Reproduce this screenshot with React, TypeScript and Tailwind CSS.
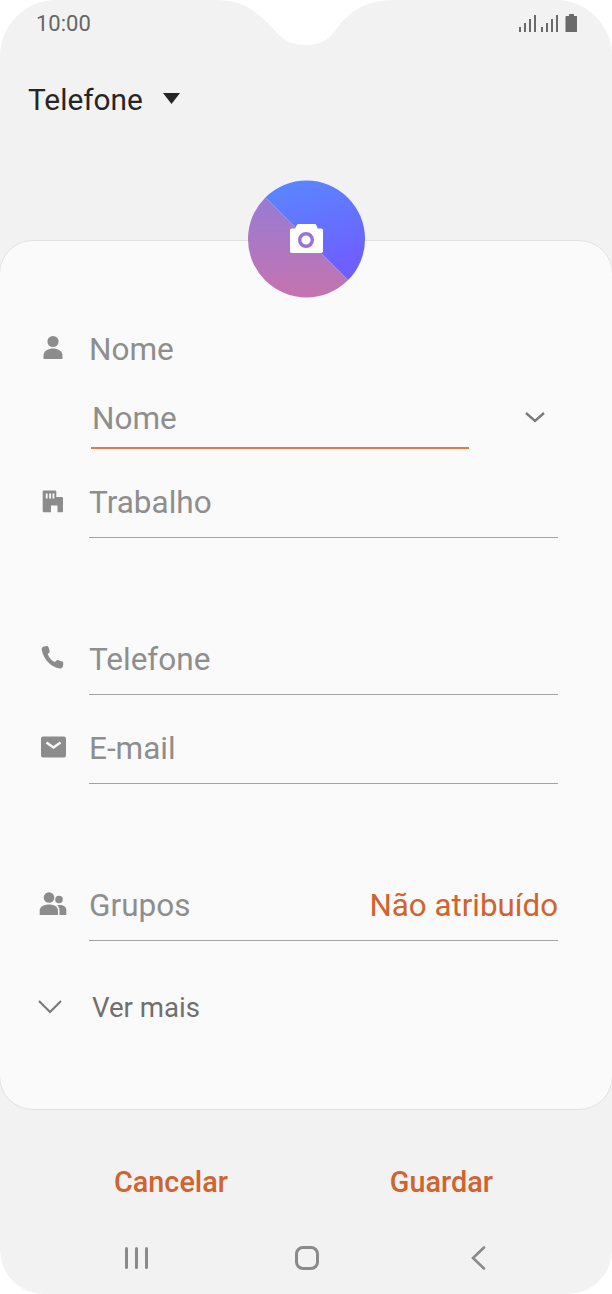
import type { ReactNode } from 'react';

const PersonIcon = () => (
  <svg width="28" height="28" viewBox="0 0 28 28" fill="#8c8c8c">
    <circle cx="14" cy="7.500" r="5.600" />
    <path d="M4.500 25v-3.500c0-4.500 5-7 9.500-7s9.500 2.500 9.500 7V25z" />
  </svg>
);

const StoreIcon = () => (
  <svg width="28" height="28" viewBox="0 0 28 28" fill="#8c8c8c">
    <path fillRule="evenodd" d="M5 3.500h11c.8 0 1.300.5 1.300 1.300V10h5.400c.8 0 1.300.5 1.300 1.300V24c0 .8-.5 1.300-1.300 1.300H18.500v-6.800h-6.500v6.800H5c-.8 0-1.300-.5-1.300-1.300V4.800C3.700 4 4.200 3.500 5 3.500zM6.800 6.500v5h1.800v-5zM10.200 6.500v5h1.800v-5zM13.500 6.500v5h1.800v-5z" />
  </svg>
);

const PhoneIcon = () => (
  <svg width="28" height="28" viewBox="0 0 28 28" fill="#8c8c8c">
    <path d="M2.700 5.500C2.400 3.800 3.800 2.600 5.200 2.400l2.400-.3c.9-.1 1.600.3 1.900 1.200l1.100 3.500c.3.8 0 1.500-.6 2L8.700 9.900c1.200 3.500 3.800 6.500 7.200 8.200l1.300-1.400c.6-.6 1.300-.8 2.100-.5l3.900 1.400c.8.300 1.200 1 1.100 1.900l-.4 2.800c-.2 1.300-1.500 2.400-3 2.100C11.700 23.200 4.200 15 2.700 5.500z" />
  </svg>
);

const MailIcon = () => (
  <svg width="28" height="28" viewBox="0 0 28 28">
    <rect x="2" y="3.500" width="25" height="21" rx="2" fill="#8c8c8c" />
    <path d="M7.500 9.500l7 5 7-5" fill="none" stroke="#fafafa" strokeWidth="2.400" />
  </svg>
);

const GroupsIcon = () => (
  <svg width="28" height="28" viewBox="0 0 28 28" fill="#8c8c8c">
    <circle cx="10" cy="7.500" r="5.300" />
    <circle cx="20" cy="9.500" r="3.800" />
    <path d="M.7 25v-4.500c0-4 4.500-6 9.300-6s9 2 9 6V25z" />
    <path d="M20.500 25v-4.500c0-2.300-.9-4-2.300-5.200.8-.2 1.700-.3 2.500-.3 3.500 0 6.600 1.800 6.600 5V25z" />
  </svg>
);

function Field({ icon, label, right }: { icon: ReactNode; label: string; right?: string }) {
  return (
    <div className="flex h-[72px]">
      <div className="flex w-[89px] items-center pl-[39px] pb-[3px]">{icon}</div>
      <div className="mr-[54px] flex flex-1 items-center justify-between border-b border-[#a3a3a3] pt-[2px]">
        <span className="text-[#8e8e8e]">{label}</span>
        {right && <span className="text-[31.3px] text-[#d0632e]">{right}</span>}
      </div>
    </div>
  );
}

export default function App() {
  return (
    <div className="relative h-[1294px] w-[612px] overflow-hidden bg-white font-['Roboto',sans-serif] text-[31.5px] leading-[44px]">
      <div className="flex h-full flex-col rounded-t-[56px] rounded-b-[44px] bg-[#f2f2f2]">
        {/* status bar */}
        <div className="flex h-[48px] shrink-0 items-center justify-between pl-[36px] pr-[35px]">
          <span className="text-[22px] text-[#666666]">10:00</span>
          <svg width="58" height="20" viewBox="0 0 58 20" fill="#6a6a6a">
            <rect x="0" y="13" width="2" height="5" />
            <rect x="5" y="9" width="2" height="9" />
            <rect x="10" y="5" width="2" height="13" />
            <rect x="15" y="1" width="2" height="17" />
            <rect x="22" y="13" width="2" height="5" />
            <rect x="27" y="9" width="2" height="9" />
            <rect x="32" y="5" width="2" height="13" />
            <rect x="37" y="1" width="2" height="17" />
            <path d="M47.500 2h2.500V0h5v2h2.500c.6 0 1 .4 1 1v15h-12V3c0-.6.4-1 1-1z" />
          </svg>
        </div>

        {/* account picker */}
        <div className="flex h-[192px] shrink-0 items-start pl-[28px] pt-[30px]">
          <span className="text-[29.8px] text-[#252525]">Telefone</span>
          <svg className="ml-[20px] mt-[15px]" width="17" height="11" viewBox="0 0 17 11" fill="#252525">
            <path d="M0 0h17l-8.500 11z" />
          </svg>
        </div>

        {/* form card */}
        <div className="-mx-px h-[870px] shrink-0 rounded-[34px] border border-[#e2e2e2] bg-[#fafafa] pt-[86px]">
          <div className="flex h-[44px]">
            <div className="flex w-[89px] items-center pl-[39px] pb-[2px]">
              <PersonIcon />
            </div>
            <span className="pt-[1px] text-[#8e8e8e]">Nome</span>
          </div>
          <div className="flex h-[77px]">
            <div className="ml-[91px] mt-[4px] h-[74px] w-[378px] border-b-2 border-[#e0784a] pl-[1px] pt-[22px] text-[#8e8e8e]">
              Nome
            </div>
            <svg className="ml-[55px] mt-[40px]" width="22" height="14" viewBox="0 0 22 14" fill="none" stroke="#7a7a7a" strokeWidth="2.400">
              <path d="M2 2l9 8 9-8" />
            </svg>
          </div>
          <div className="h-[18px]" />
          <Field icon={<StoreIcon />} label="Trabalho" />
          <div className="h-[85px]" />
          <Field icon={<PhoneIcon />} label="Telefone" />
          <div className="h-[17px]" />
          <Field icon={<MailIcon />} label="E-mail" />
          <div className="h-[85px]" />
          <Field icon={<GroupsIcon />} label="Grupos" right="Não atribuído" />
          <div className="mt-[44px] flex h-[44px] items-center pl-[37px]">
            <svg width="26" height="16" viewBox="0 0 26 16" fill="none" stroke="#7a7a7a" strokeWidth="2.200">
              <path d="M2 2l11 11L24 2" />
            </svg>
            <span className="ml-[29px] pt-[1px] text-[27.6px] text-[#6f6f6f]">Ver mais</span>
          </div>
        </div>

        {/* actions */}
        <div className="mt-[50px] flex h-[44px] shrink-0 items-center">
          <span className="ml-[114px] text-[28.8px] font-medium text-[#d0632e]">Cancelar</span>
          <span className="ml-[162px] text-[28.8px] font-medium text-[#d0632e]">Guardar</span>
        </div>

        {/* navigation bar */}
        <div className="mt-[39px] flex h-[30px] shrink-0 items-center">
          <div className="ml-[125px] flex gap-[7px]">
            <span className="h-[22px] w-[3px] rounded-full bg-[#8a8a8a]" />
            <span className="h-[22px] w-[3px] rounded-full bg-[#8a8a8a]" />
            <span className="h-[22px] w-[3px] rounded-full bg-[#8a8a8a]" />
          </div>
          <span className="ml-[147px] h-[24px] w-[24px] rounded-[8px] border-[3px] border-[#8a8a8a]" />
          <svg className="ml-[151px]" width="17" height="26" viewBox="0 0 17 26" fill="none" stroke="#8a8a8a" strokeWidth="2.600" strokeLinecap="round">
            <path d="M14 2.500L3 13l11 10.500" />
          </svg>
        </div>
      </div>

      {/* notch */}
      <svg className="absolute left-[200px] top-0" width="212" height="50" viewBox="200 0 212 50" fill="#ffffff">
        <path d="M215 0C245 0 258 12 277 33C285 42 295 45 306 45C317 45 327 42 335 31C348 12 365 0 395 0Z" />
      </svg>

      {/* photo button */}
      <svg className="absolute left-[248px] top-[180px]" width="117" height="118" viewBox="248 180 117 118">
        <defs>
          <linearGradient id="upper" x1="0" y1="0" x2="0.4" y2="1">
            <stop offset="0" stopColor="#5590ff" />
            <stop offset="1" stopColor="#6d60ff" />
          </linearGradient>
          <linearGradient id="lower" x1="0" y1="0" x2="0" y2="1">
            <stop offset="0" stopColor="#987bd4" />
            <stop offset="1" stopColor="#c673ae" />
          </linearGradient>
          <clipPath id="disc">
            <circle cx="306.500" cy="239" r="58.500" />
          </clipPath>
        </defs>
        <g clipPath="url(#disc)">
          <path d="M265 197L348 280V300H240V197Z" fill="url(#lower)" />
          <path d="M265 197L348 280H370V170H240V197Z" fill="url(#upper)" />
        </g>
        <path d="M296.500 225.500c.4-.9 1-1.500 2-1.500h16c1 0 1.600.6 2 1.500l1.200 3h3.500c1 0 1.800.8 1.800 1.800v21c0 1-.8 1.700-1.800 1.700h-29.400c-1 0-1.800-.7-1.800-1.700v-21c0-1 .8-1.800 1.800-1.800h3.500z" fill="#ffffff" />
        <circle cx="306" cy="240" r="6.300" fill="none" stroke="#9a70d8" strokeWidth="3.400" />
      </svg>
    </div>
  );
}
